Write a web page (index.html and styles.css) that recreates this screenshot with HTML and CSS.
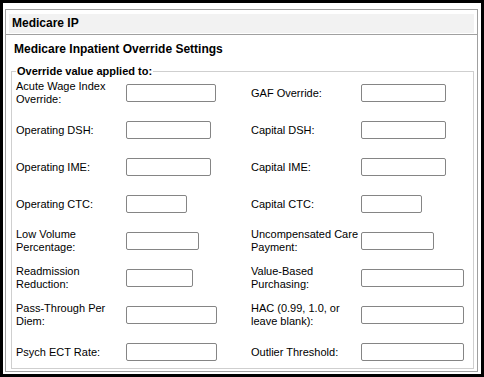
FILE: index.html
```html
<!DOCTYPE html>
<html lang="en">
<head>
  <meta charset="UTF-8" />
  <title>Medicare IP</title>
  <link rel="stylesheet" href="styles.css">
</head>
<body>
  <div class="frame">
    <div class="panel">
      <div class="panel-head">
        <div class="head-bar">Medicare IP</div>
      </div>
      <h2>Medicare Inpatient Override Settings</h2>
      <fieldset>
        <legend>Override value applied to:</legend>
        <div class="grid">
          <label for="awi">Acute Wage Index Override:</label>
          <input type="text" id="awi" class="w90" />
          <label for="gaf">GAF Override:</label>
          <input type="text" id="gaf" class="w85" />

          <label for="odsh">Operating DSH:</label>
          <input type="text" id="odsh" class="w85" />
          <label for="cdsh">Capital DSH:</label>
          <input type="text" id="cdsh" class="w85" />

          <label for="oime">Operating IME:</label>
          <input type="text" id="oime" class="w85" />
          <label for="cime">Capital IME:</label>
          <input type="text" id="cime" class="w85" />

          <label for="octc">Operating CTC:</label>
          <input type="text" id="octc" class="w61" />
          <label for="cctc">Capital CTC:</label>
          <input type="text" id="cctc" class="w61" />

          <label for="lvp">Low Volume Percentage:</label>
          <input type="text" id="lvp" class="w73" />
          <label for="ucp">Uncompensated Care Payment:</label>
          <input type="text" id="ucp" class="w73" />

          <label for="rr">Readmission Reduction:</label>
          <input type="text" id="rr" class="w67" />
          <label for="vbp">Value-Based Purchasing:</label>
          <input type="text" id="vbp" class="w103" />

          <label for="ptpd">Pass-Through Per Diem:</label>
          <input type="text" id="ptpd" class="w91" />
          <label for="hac">HAC (0.99, 1.0, or leave blank):</label>
          <input type="text" id="hac" class="w103" />

          <label for="ect">Psych ECT Rate:</label>
          <input type="text" id="ect" class="w91" />
          <label for="out">Outlier Threshold:</label>
          <input type="text" id="out" class="w103" />
        </div>
      </fieldset>
    </div>
  </div>
</body>
</html>
```

FILE: styles.css
```css
html, body {
  margin: 0;
  padding: 0;
  background: #fff;
  font-family: Arial, "Liberation Sans", sans-serif;
  color: #000;
}
.frame {
  height: 377px;
  box-sizing: border-box;
  border: 3px solid #000;
  padding: 6px 3px 2px 2px;
}
.panel {
  height: 100%;
  box-sizing: border-box;
  border: 1px solid #a0a0a0;
}
.panel-head {
  padding: 4px 3px 1px 3px;
  border-bottom: 1px solid #a0a0a0;
}
.head-bar {
  background: #f2f2f2;
  height: 19px;
  line-height: 19px;
  padding-left: 3px;
  font-size: 12px;
  font-weight: bold;
}
h2 {
  margin: 7px 0 0 8px;
  font-size: 12px;
  line-height: 15px;
  font-weight: bold;
}
fieldset {
  margin: 8px 3px 0 5px;
  padding: 2px 4px 3px 4px;
  border: 1px solid #cfcfcf;
}
legend {
  padding: 0 1px;
  font-size: 11px;
  font-weight: bold;
  line-height: 13px;
}
.grid {
  display: grid;
  grid-template-columns: 110px 125px 110px auto;
  grid-auto-rows: 26px;
  row-gap: 11px;
  align-items: center;
}
label {
  font-size: 11px;
  line-height: 13px;
}
input {
  height: 18px;
  box-sizing: border-box;
  border: 1px solid #858585;
  border-radius: 2px;
  padding: 0 2px;
  font-size: 11px;
}
.w61 { width: 61px; }
.w67 { width: 67px; }
.w73 { width: 73px; }
.w85 { width: 85px; }
.w90 { width: 90px; }
.w91 { width: 91px; }
.w103 { width: 103px; }
```
